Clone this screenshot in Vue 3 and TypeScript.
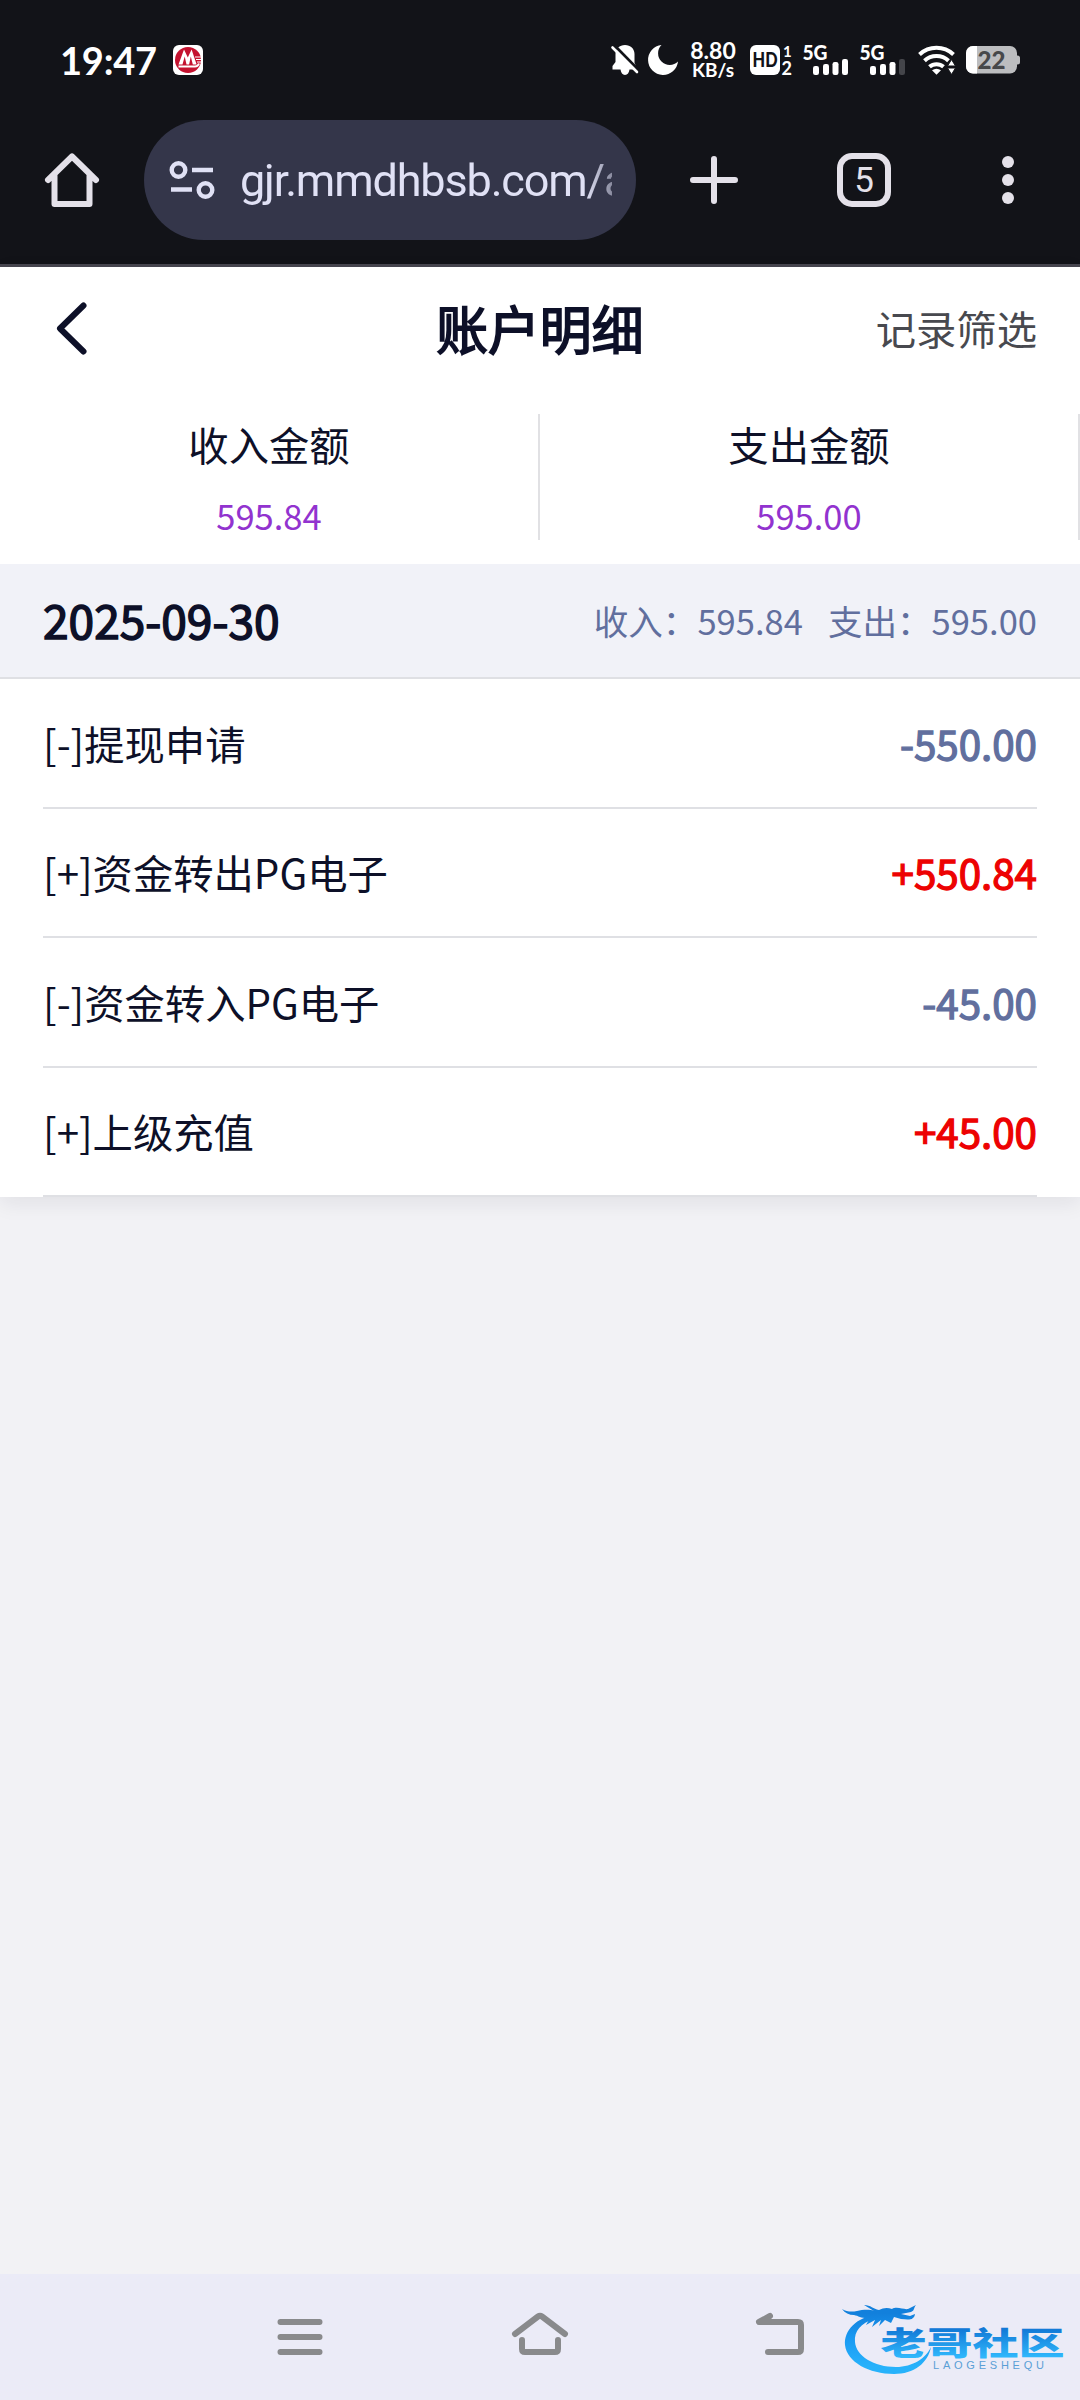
<script setup lang="ts">
interface Entry {
  title: string
  amount: string
}

const totals = [
  { label: '收入金额', value: '595.84' },
  { label: '支出金额', value: '595.00' },
]

const entries: Entry[] = [
  { title: '[-]提现申请', amount: '-550.00' },
  { title: '[+]资金转出PG电子', amount: '+550.84' },
  { title: '[-]资金转入PG电子', amount: '-45.00' },
  { title: '[+]上级充值', amount: '+45.00' },
]

const signals = [4, 3]
const bars = [
  { x: 10, y: 21, h: 9 },
  { x: 20, y: 19, h: 11 },
  { x: 29.5, y: 17, h: 13 },
  { x: 39, y: 14, h: 16 },
]
</script>

<template>
  <div class="screen">
    <header class="chrome">
      <div class="status">
        <span class="clock">19:47</span>
        <svg class="bank" width="30" height="30" viewBox="0 0 30 30">
          <rect width="30" height="30" rx="6" fill="#fff" />
          <circle cx="15" cy="15" r="13" fill="#c4122f" />
          <path d="M5.500 19.500 11 4.500l3.800 8 3.800-8 5 15h-3.800l-2-8-1.700 8h-2.600l-1.800-8-2.200 8z" fill="#fff" />
          <path d="M5.500 21.500h16.500q3 0 4-3" fill="none" stroke="#fff" stroke-width="2" />
          <path d="M22 12h6M23 14.500h5M24 17h4" stroke="#fff" stroke-width="1" />
        </svg>
        <div class="spacer"></div>
        <svg width="28" height="30" viewBox="0 0 28 30">
          <path d="M14 0C8.500 0 4.500 3.800 4.500 9v8L1.500 21v3.500h8C10 27.800 11.500 30 14 30s4-2.200 4.500-5.500h6V20l-1-2V9C23.500 3.800 19.500 0 14 0z" fill="#fff" />
          <path d="M3 0 28 25.500" stroke="#121318" stroke-width="3" />
          <path d="M1.500 2.500 26 27" stroke="#fff" stroke-width="2.600" stroke-linecap="round" />
        </svg>
        <svg class="moon" width="30" height="30" viewBox="0 0 30 30">
          <path d="M13.500 0A15 15 0 1 0 30 16.500 10.200 10.200 0 0 1 13.500 0z" fill="#fff" />
        </svg>
        <div class="rate"><span>8.80</span><small>KB/s</small></div>
        <svg class="hd" width="44" height="32" viewBox="0 0 44 32">
          <rect y="1" width="30" height="30" rx="6" fill="#fff" />
          <text x="2.600" y="23" class="hd-text" textLength="25" lengthAdjust="spacingAndGlyphs">HD</text>
          <text x="33" y="12.500" class="sim">1</text>
          <text x="31.500" y="30.500" class="sim big">2</text>
        </svg>
        <svg v-for="(level, i) in signals" :key="i" class="signal" width="46" height="30" viewBox="0 0 46 30">
          <text x="-0.500" y="14.500" class="net" textLength="25" lengthAdjust="spacingAndGlyphs">5G</text>
          <rect
            v-for="(b, n) in bars"
            :key="n"
            :x="b.x"
            :y="b.y"
            :height="b.h"
            width="6"
            rx="2.200"
            :fill="n < level ? '#fff' : '#44454a'"
          />
        </svg>
        <svg class="wifi" width="38" height="30" viewBox="0 0 38 30">
          <g fill="none" stroke="#fff" stroke-width="4">
            <path d="M1.500 9.500a25 25 0 0 1 34 0" />
            <path d="M6.500 15.800a17.500 17.500 0 0 1 24 0" />
            <path d="M11.500 21.800a10.500 10.500 0 0 1 14 0" />
          </g>
          <path d="M14 25.200q4.500-3 9 0l-4.500 4.500z" fill="#fff" />
          <path d="M33.500 14.500 37.500 21h-8zM33.500 29.500l4-6.500h-8z" fill="#fff" stroke="#121318" stroke-width="1" />
        </svg>
        <svg class="battery" width="54" height="28" viewBox="0 0 54 28">
          <path d="M49 9.500h2.500q2.500 0 2.500 2.500v4q0 2.500-2.500 2.500H49z" fill="#bcbdbf" />
          <rect width="51" height="27.500" rx="7" fill="#bcbdbf" />
          <path d="M7 0h4v27.500H7a7 7 0 0 1-7-7V7a7 7 0 0 1 7-7z" fill="#fff" />
          <text x="11.500" y="23" class="charge" textLength="28" lengthAdjust="spacingAndGlyphs">22</text>
        </svg>
      </div>

      <div class="toolbar">
        <svg width="54" height="54" viewBox="0 0 54 54">
          <path d="M3 27 27 3.500 51 27M9.500 22v29h35V22" fill="none" stroke="#e4e1e9" stroke-width="6" stroke-linecap="round" stroke-linejoin="round" />
        </svg>
        <div class="address">
          <svg width="46" height="40" viewBox="0 0 46 40">
            <g fill="none" stroke="#e0e1f5" stroke-width="4.400">
              <circle cx="9.500" cy="10" r="6.800" />
              <circle cx="36.500" cy="30" r="6.800" />
              <path d="M23 10h21M2 29.500h21" />
            </g>
          </svg>
          <span class="url">gjr.mmdhbsb.com/a</span>
        </div>
        <svg class="plus" width="48" height="48" viewBox="0 0 48 48">
          <path d="M24 3v42M3 24h42" stroke="#e4e1e9" stroke-width="6" stroke-linecap="round" />
        </svg>
        <div class="tabs">5</div>
        <svg class="more" width="12" height="48" viewBox="0 0 12 48">
          <g fill="#e4e1e9">
            <circle cx="6" cy="6" r="6" />
            <circle cx="6" cy="24" r="6" />
            <circle cx="6" cy="42" r="6" />
          </g>
        </svg>
      </div>
    </header>

    <main class="page">
      <section class="card">
        <div class="title-bar">
          <svg width="32" height="52" viewBox="0 0 32 52">
            <path d="M27.500 3.500 4 26.500l23.500 23" fill="none" stroke="#0d1028" stroke-width="6" stroke-linecap="round" stroke-linejoin="round" />
          </svg>
          <h1>账户明细</h1>
          <span class="filter">记录筛选</span>
        </div>
        <div class="totals">
          <div v-for="t in totals" :key="t.label" class="total">
            <span>{{ t.label }}</span>
            <b>{{ t.value }}</b>
          </div>
        </div>
        <div class="day">
          <span class="date">2025-09-30</span>
          <span class="sums"><span>收入：595.84</span><span>支出：595.00</span></span>
        </div>
        <ul class="entries">
          <li v-for="e in entries" :key="e.title">
            <span>{{ e.title }}</span>
            <span class="amount" :class="{ plus: e.amount.startsWith('+') }">{{ e.amount }}</span>
          </li>
        </ul>
      </section>
    </main>

    <nav class="nav">
      <svg width="60" height="60" viewBox="0 0 60 60">
        <path d="M10.500 15h39M10.500 30h39M10.500 45h39" />
      </svg>
      <svg width="60" height="60" viewBox="0 0 60 60">
        <path d="M5 27 28 9.500q2-1.500 4 0L55 27M12 33v9q0 3 3 3h30q3 0 3-3v-9" />
      </svg>
      <svg width="60" height="60" viewBox="0 0 60 60">
        <path d="M20 9 9 15h39q3 0 3 3v24q0 3-3 3H18" />
      </svg>
      <svg class="brand" width="224" height="76" viewBox="0 0 224 76">
        <defs>
          <linearGradient id="brand-blue" x1="0" y1="0" x2="0" y2="76" gradientUnits="userSpaceOnUse">
            <stop offset="0.150" stop-color="#1280dc" />
            <stop offset="0.500" stop-color="#1a9bf3" />
            <stop offset="0.850" stop-color="#27b2fb" />
          </linearGradient>
          <linearGradient id="name-blue" x1="0" y1="-38" x2="0" y2="3" gradientUnits="userSpaceOnUse">
            <stop offset="0" stop-color="#1278d6" />
            <stop offset="1" stop-color="#2fb6fb" />
          </linearGradient>
        </defs>
        <g fill="url(#brand-blue)">
          <path d="M35 12C14 16 2 28 3 43c2 17 24 29 49 29 20 0 34-11 37-27-5 11-18 20-35 20-22 0-40-11-41-25-1-11 6-19 19-23z" />
          <path d="M0 7c5 3 10 3 15 2s12-2 17 0l-10-6c7 0 9 4 15 5 4-2 8-3 13-1 5-3 12 1 16 0l8-4c-3 4-1 5-5 7l-10 2 9 2 5-2c-1 6-5 6-14 5l-7-2-3 6-6-3-6 6 2-6-9 7 3-7-9 5 4-7C20 17 17 14 12 13 7 13 3 11 0 7z" />
        </g>
        <g transform="translate(38.500 52.500) scale(1 0.680)">
          <text class="brand-name" x="0" y="0">老哥社区</text>
        </g>
        <text class="brand-sub" x="91" y="67" textLength="111" lengthAdjust="spacing">LAOGESHEQU</text>
      </svg>
    </nav>
  </div>
</template>

<style>
body {
  margin: 0;
}
</style>

<style scoped>
.screen {
  width: 1080px;
  height: 2400px;
  display: flex;
  flex-direction: column;
  overflow: hidden;
  background: #f2f2f5;
  font-family: 'Noto Sans CJK SC', sans-serif;
  color: #0d1028;
}
svg {
  display: block;
  flex: none;
  overflow: visible;
}
.chrome {
  box-sizing: border-box;
  height: 267px;
  background: #121318;
  border-bottom: 3px solid #47464f;
}
.status {
  height: 120px;
  display: flex;
  align-items: center;
  box-sizing: border-box;
  padding: 0 60px 0 60px;
  color: #fff;
  font-family: Lato, sans-serif;
}
.clock {
  width: 113px;
  font-size: 38px;
  font-weight: 700;
  line-height: 40px;
  letter-spacing: -0.200px;
}
.spacer {
  flex: 1;
}
.moon {
  margin-left: 9px;
}
.rate {
  width: 50px;
  margin-left: 10px;
  display: flex;
  flex-direction: column;
  align-items: center;
  font-weight: 700;
  font-size: 23px;
  line-height: 19px;
}
.rate small {
  font-size: 19px;
  line-height: 19px;
}
.hd {
  margin-left: 12px;
}
.hd-text {
  font: 900 20px Lato, sans-serif;
  fill: #121318;
}
.sim {
  font: 700 15px Lato, sans-serif;
  fill: #fff;
}
.sim.big {
  font-size: 18px;
}
.signal {
  margin-left: 9px;
}
.signal + .signal {
  margin-left: 11px;
}
.net {
  font: 900 20px Lato, sans-serif;
  fill: #fff;
}
.wifi {
  margin-left: 12px;
}
.battery {
  margin-left: 10px;
}
.charge {
  font: 900 25px Lato, sans-serif;
  fill: #47484a;
}
.toolbar {
  height: 120px;
  display: flex;
  align-items: center;
  padding-left: 45px;
}
.address {
  box-sizing: border-box;
  width: 492px;
  height: 120px;
  margin-left: 45px;
  padding: 0 24px 0 25px;
  border-radius: 60px;
  background: #34364a;
  display: flex;
  align-items: center;
}
.url {
  width: 372px;
  margin-left: 25px;
  padding-top: 2px;
  overflow: hidden;
  white-space: nowrap;
  font: 45px/60px Roboto, sans-serif;
  letter-spacing: -1.150px;
  color: #e0e1f5;
  -webkit-mask-image: linear-gradient(90deg, #000 93%, rgba(0, 0, 0, 0.500));
  mask-image: linear-gradient(90deg, #000 93%, rgba(0, 0, 0, 0.500));
}
.toolbar .plus {
  margin-left: 54px;
}
.tabs {
  box-sizing: border-box;
  width: 54px;
  height: 54px;
  margin-left: 99px;
  border: 6px solid #e4e1e9;
  border-radius: 15px;
  color: #e4e1e9;
  font: 400 35px/44px Roboto, sans-serif;
  text-align: center;
}
.more {
  margin-left: 111px;
}
.page {
  flex: 1;
}
.card {
  background: #fff;
  box-shadow: 0 6px 20px rgba(20, 20, 50, 0.080);
}
.title-bar {
  box-sizing: border-box;
  height: 126px;
  display: flex;
  align-items: center;
  justify-content: space-between;
  padding: 0 43px 5px 56px;
}
.title-bar svg {
  margin-right: 116px;
}
h1 {
  margin: 0;
  font-size: 51.840px;
  font-weight: 400;
  line-height: 76px;
  -webkit-text-stroke: 1.800px currentColor;
}
.filter {
  font-size: 40.320px;
  line-height: 60px;
  color: #48494f;
}
.totals {
  height: 171px;
  display: flex;
  align-items: flex-start;
}
.total {
  box-sizing: border-box;
  width: 540px;
  height: 126px;
  margin-top: 21px;
  border-right: 2px solid #e1e1e4;
  display: flex;
  flex-direction: column;
  align-items: center;
  font-size: 40.320px;
  line-height: 60px;
}
.total b {
  margin-top: 12px;
  font-size: 34.560px;
  font-weight: 400;
  line-height: 58px;
  color: #9233cf;
}
.day {
  height: 113px;
  display: flex;
  align-items: center;
  justify-content: space-between;
  padding: 0 43px;
  background: #f1f2f8;
  border-bottom: 2px solid #dfe0e4;
}
.date {
  padding-bottom: 4px;
  font-size: 46.080px;
  -webkit-text-stroke: 1.500px currentColor;
}
.sums {
  padding-bottom: 2px;
  display: flex;
  gap: 25px;
  font-size: 34.560px;
  color: #616f9e;
}
.entries {
  margin: 0;
  padding: 0 43px;
  list-style: none;
}
.entries li {
  box-sizing: border-box;
  height: 129.500px;
  padding-bottom: 1px;
  display: flex;
  align-items: center;
  justify-content: space-between;
  border-bottom: 2px solid #dfe0e4;
  font-size: 40.320px;
}
.amount {
  color: #616f9e;
  -webkit-text-stroke: 1.300px currentColor;
}
.amount.plus {
  color: #ed0202;
}
.nav {
  position: relative;
  height: 126px;
  display: flex;
  align-items: center;
  gap: 180px;
  padding-left: 270px;
  background: #ebebf7;
}
.nav > svg:not(.brand) {
  fill: none;
  stroke: #898a8c;
  stroke-width: 6;
  stroke-linecap: round;
  stroke-linejoin: round;
}
.brand {
  position: absolute;
  left: 842px;
  top: 28px;
}
.brand-name {
  font: 900 46px 'Noto Sans CJK SC', sans-serif;
  fill: url(#name-blue);
}
.brand-sub {
  font: 400 11px 'Liberation Sans', sans-serif;
  fill: #5a9fd6;
}
</style>
